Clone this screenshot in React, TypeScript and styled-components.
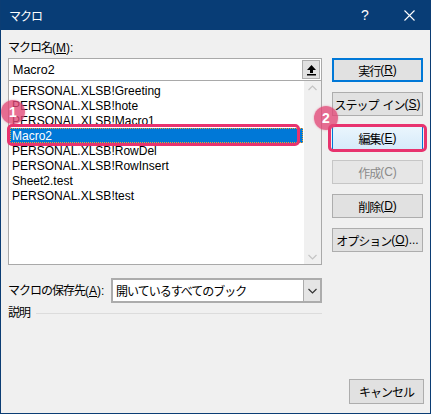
import styled, { createGlobalStyle } from "styled-components";

const GlobalStyle = createGlobalStyle`
  html, body {
    margin: 0;
    padding: 0;
    background: #f0f0f0;
  }
  * {
    box-sizing: border-box;
  }
`;

const FONT = `"Liberation Sans", "Noto Sans CJK JP", sans-serif`;

const Window = styled.div`
  position: relative;
  width: 431px;
  height: 414px;
  display: flex;
  flex-direction: column;
  background: #f0f0f0;
  border: 1px solid #0b3d74;
  border-top: none;
  font-family: ${FONT};
  font-size: 12px;
  color: #000;
  overflow: hidden;
`;

const TitleBar = styled.div`
  height: 30px;
  flex-shrink: 0;
  margin: 0 -1px;
  display: flex;
  align-items: center;
  background: #083d76;
  color: #fff;
  padding-left: 9px;
`;

const TitleText = styled.span`
  flex: 1;
  font-size: 12px;
  letter-spacing: -1px;
`;

const TitleButton = styled.div`
  width: 44px;
  height: 30px;
  display: flex;
  align-items: center;
  justify-content: center;
  font-size: 14px;
`;

const Body = styled.div`
  display: grid;
  grid-template-columns: 314px 91px;
  column-gap: 10px;
  padding: 0 7px;
`;

const LeftColumn = styled.div`
  display: flex;
  flex-direction: column;
`;

const Label = styled.div`
  line-height: 16px;
  white-space: nowrap;
`;

/* Meiryo UI kana are narrower than Noto's, so tighten them */
const Ja = styled.span`
  letter-spacing: -1px;
`;

const Space = styled.span`
  display: inline-block;
  width: 4px;
`;

const NameLabel = styled(Label)`
  padding-top: 10px;
  margin-bottom: 2px;
`;

const Underline = styled.span`
  text-decoration: underline;
`;

const NameInput = styled.div`
  height: 23px;
  display: flex;
  align-items: center;
  justify-content: space-between;
  background: #fff;
  border: 1px solid #a9a9a9;
  padding: 0 1px 0 4px;
  font-size: 12.5px;
`;

const UpButton = styled.div`
  width: 18px;
  height: 19px;
  display: flex;
  align-items: center;
  justify-content: center;
  background: #e1e1e1;
  border: 1px solid #adadad;
`;

const ListBox = styled.div`
  height: 184px;
  display: flex;
  background: #fff;
  border: 1px solid #a9a9a9;
  border-top: none;
`;

const ListItems = styled.div`
  flex: 1;
  padding: 2px 1px 0 1px;
`;

const ListItem = styled.div<{ $selected?: boolean }>`
  height: 15px;
  line-height: 16px;
  padding-left: 2px;
  white-space: nowrap;
  background: ${(p) => (p.$selected ? "#0078d7" : "transparent")};
  color: ${(p) => (p.$selected ? "#fff" : "#000")};
  outline: ${(p) => (p.$selected ? "1px dotted #f0a030" : "none")};
  outline-offset: -1px;
`;

const ScrollBar = styled.div`
  width: 17px;
  display: flex;
  flex-direction: column;
  justify-content: space-between;
  align-items: center;
  background: #f0f0f0;
  padding: 4px 0;
`;

const StoreRow = styled.div`
  margin-top: 13px;
  display: flex;
  align-items: center;
  justify-content: space-between;
`;

const Select = styled.div`
  width: 211px;
  height: 25px;
  display: flex;
  align-items: center;
  justify-content: space-between;
  background: #fff;
  border: 2px solid #acacac;
  padding-left: 3px;
`;

const SelectArrow = styled.div`
  width: 17px;
  height: 21px;
  display: flex;
  align-items: center;
  justify-content: center;
  background: #e5e5e5;
  border-left: 1px solid #acacac;
`;

const DescRow = styled.div`
  margin-top: 2px;
  display: flex;
  align-items: center;
  gap: 6px;
`;

const Rule = styled.div`
  flex: 1;
  height: 1px;
  background: #dcdcdc;
`;

const RightColumn = styled.div`
  padding-top: 28px;
  display: flex;
  flex-direction: column;
  gap: 10px;
`;

type Variant = "normal" | "default" | "hot" | "disabled";

const Button = styled.div<{ $variant?: Variant }>`
  height: 24px;
  display: flex;
  align-items: center;
  justify-content: center;
  white-space: nowrap;
  font-size: 12px;
  background: ${(p) =>
    p.$variant === "hot"
      ? "linear-gradient(#eaf5fd, #d6ebfa)"
      : p.$variant === "disabled"
      ? "#e6e6e6"
      : "#e1e1e1"};
  border: ${(p) =>
    p.$variant === "default"
      ? "2px solid #0078d7"
      : p.$variant === "hot"
      ? "1px solid #0078d7"
      : p.$variant === "disabled"
      ? "1px solid #c6c6c6"
      : "1px solid #adadad"};
  color: ${(p) => (p.$variant === "disabled" ? "#8a8a8a" : "#000")};
`;

const Footer = styled.div`
  margin-top: auto;
  display: flex;
  justify-content: flex-end;
  padding: 0 6px 9px 0;
`;

const CancelButton = styled(Button)`
  width: 75px;
  height: 25px;
`;

const Highlight = styled.div<{ $x: number; $y: number; $w: number; $h: number }>`
  position: absolute;
  left: ${(p) => p.$x}px;
  top: ${(p) => p.$y}px;
  width: ${(p) => p.$w}px;
  height: ${(p) => p.$h}px;
  border: 3px solid #e8336e;
  border-radius: 5px;
  pointer-events: none;
`;

const Badge = styled.div<{ $x: number; $y: number }>`
  position: absolute;
  left: ${(p) => p.$x - 12}px;
  top: ${(p) => p.$y - 12}px;
  width: 24px;
  height: 24px;
  border-radius: 50%;
  background: rgba(226, 70, 118, 0.78);
  box-shadow: 0 0 2px rgba(226, 70, 118, 0.5);
  color: #fff;
  font-family: "Liberation Sans", sans-serif;
  font-size: 14px;
  font-weight: bold;
  display: flex;
  align-items: center;
  justify-content: center;
`;

const macros = [
  "PERSONAL.XLSB!Greeting",
  "PERSONAL.XLSB!hote",
  "PERSONAL.XLSB!Macro1",
  "Macro2",
  "PERSONAL.XLSB!RowDel",
  "PERSONAL.XLSB!RowInsert",
  "Sheet2.test",
  "PERSONAL.XLSB!test",
];

function Chevron({ up, color }: { up?: boolean; color: string }) {
  return (
    <svg width="9" height="6" viewBox="0 0 9 6">
      <path
        d={up ? "M0.5 5 L4.5 1 L8.5 5" : "M0.5 1 L4.5 5 L8.5 1"}
        fill="none"
        stroke={color}
        strokeWidth="1.2"
      />
    </svg>
  );
}

function App() {
  return (
    <>
      <GlobalStyle />
      <Window>
        <TitleBar>
          <TitleText>マクロ</TitleText>
          <TitleButton>?</TitleButton>
          <TitleButton>
            <svg width="11" height="11" viewBox="0 0 11 11">
              <path d="M0.5 0.5 L10.5 10.5 M10.5 0.5 L0.5 10.5" stroke="#fff" strokeWidth="1.1" />
            </svg>
          </TitleButton>
        </TitleBar>
        <Body>
          <LeftColumn>
            <NameLabel>
              <Ja>マクロ名</Ja>(<Underline>M</Underline>):
            </NameLabel>
            <NameInput>
              <span>Macro2</span>
              <UpButton>
                <svg width="11" height="12" viewBox="0 0 11 12">
                  <path d="M5.5 1 L10 6 L7 6 L7 9 L4 9 L4 6 L1 6 Z" fill="#000" />
                  <rect x="1" y="10" width="9" height="1.5" fill="#000" />
                </svg>
              </UpButton>
            </NameInput>
            <ListBox>
              <ListItems>
                {macros.map((m) => (
                  <ListItem key={m} $selected={m === "Macro2"}>
                    {m}
                  </ListItem>
                ))}
              </ListItems>
              <ScrollBar>
                <Chevron up color="#c4c4c4" />
                <Chevron color="#c4c4c4" />
              </ScrollBar>
            </ListBox>
            <StoreRow>
              <Label>
                <Ja>マクロの保存先</Ja>(<Underline>A</Underline>):
              </Label>
              <Select>
                <Ja>開いているすべてのブック</Ja>
                <SelectArrow>
                  <Chevron color="#333" />
                </SelectArrow>
              </Select>
            </StoreRow>
            <DescRow>
              <Label>
                <Ja>説明</Ja>
              </Label>
              <Rule />
            </DescRow>
          </LeftColumn>
          <RightColumn>
            <Button $variant="default">
              <Ja>実行</Ja>(<Underline>R</Underline>)
            </Button>
            <Button>
              <Ja>ステップ</Ja>
              <Space />
              <Ja>イン</Ja>(<Underline>S</Underline>)
            </Button>
            <Button $variant="hot">
              <Ja>編集</Ja>(<Underline>E</Underline>)
            </Button>
            <Button $variant="disabled">
              <Ja>作成</Ja>(C)
            </Button>
            <Button>
              <Ja>削除</Ja>(<Underline>D</Underline>)
            </Button>
            <Button>
              <Ja>オプション</Ja>(<Underline>O</Underline>)...
            </Button>
          </RightColumn>
        </Body>
        <Footer>
          <CancelButton>
            <Ja>キャンセル</Ja>
          </CancelButton>
        </Footer>
        <Highlight $x={6} $y={124} $w={293} $h={22} />
        <Highlight $x={327} $y={124} $w={99} $h={28} />
        <Badge $x={12} $y={112}>1</Badge>
        <Badge $x={325} $y={118}>2</Badge>
      </Window>
    </>
  );
}

export default App;
